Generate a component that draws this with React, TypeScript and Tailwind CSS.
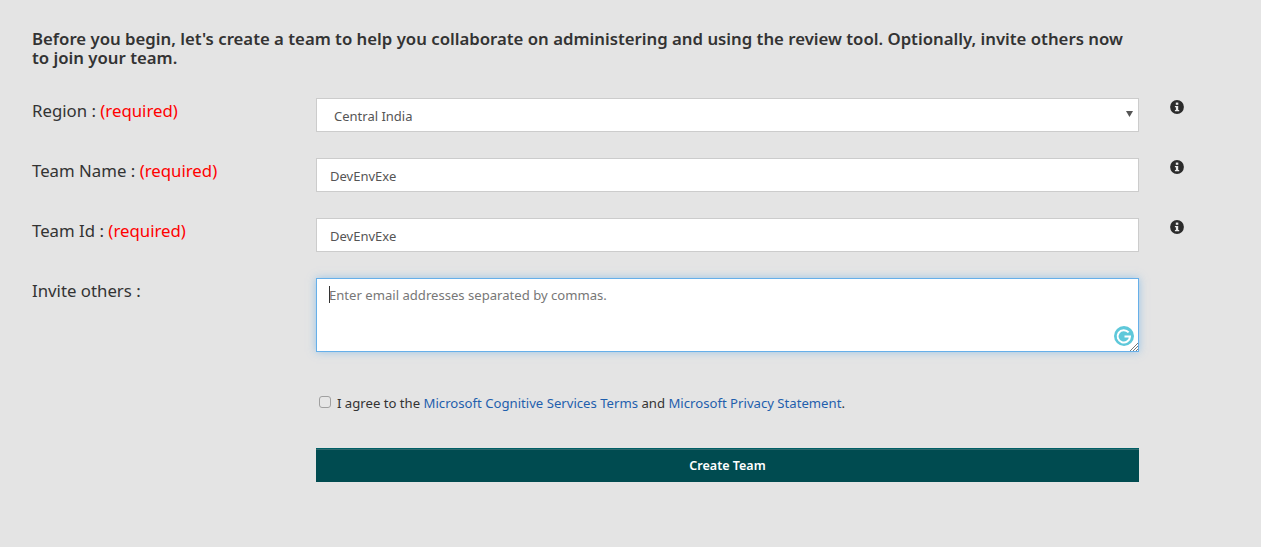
function Info() {
  return (
    <svg width="14" height="14" viewBox="0 0 14 14" className="block">
      <circle cx="7" cy="7" r="6.9" fill="#2b2b2b" />
      <rect x="5.8" y="2.6" width="2.5" height="2.2" fill="#e8e8e8" />
      <path d="M4.9 5.9H8.2V9.9H9.2V11.3H4.9V9.9H5.9V7.2H4.9Z" fill="#e8e8e8" />
    </svg>
  );
}

function Row({ label, required, children, info }: { label: string; required?: boolean; children: React.ReactNode; info?: boolean }) {
  return (
    <div className="flex mb-[26px]">
      <div className="w-[284px] shrink-0 text-[16.8px] leading-[25px] text-[#333333]">
        {label} :{required && <span className="text-[#ff0000]"> (required)</span>}
      </div>
      <div className="w-[823px] shrink-0">{children}</div>
      {info && (
        <div className="ml-[31px] pt-[2px]">
          <Info />
        </div>
      )}
    </div>
  );
}

const inputCls =
  "block w-full h-[34px] bg-white border border-[#cccccc] px-[13px] pt-[2px] text-[13px] text-[#555555] outline-none";

export default function App() {
  return (
    <div
      className="w-[1261px] h-[547px] overflow-hidden bg-[#e4e4e4] pl-[32px] pt-[29px]"
      style={{ fontFamily: '"Noto Sans", "Open Sans", sans-serif' }}
    >
      <p className="w-[1100px] text-[16.75px] leading-[19px] font-semibold text-[#333333] mb-[31px]">
        Before you begin, let's create a team to help you collaborate on administering and using the review tool. Optionally, invite others now to join your team.
      </p>
      <Row label="Region" required info>
        <div className="relative">
          <div className="flex items-center h-[34px] bg-white border border-[#cccccc] pl-[17px] pt-[4px] text-[13px] text-[#555555]">
            Central India
          </div>
          <svg width="7" height="6" viewBox="0 0 7 6" className="absolute right-[6px] top-[13px]">
            <path d="M0 0H7L3.5 6Z" fill="#555555" />
          </svg>
        </div>
      </Row>
      <Row label="Team Name" required info>
        <input className={inputCls} defaultValue="DevEnvExe" />
      </Row>
      <Row label="Team Id" required info>
        <input className={inputCls} defaultValue="DevEnvExe" />
      </Row>
      <Row label="Invite others">
        <div className="relative h-[74px] bg-white border border-[#66afe9] shadow-[0_0_8px_rgba(102,175,233,0.6)] px-[12px] pt-[6px] text-[13.1px] leading-[20px] text-[#777777]">
          <span className="absolute left-[12px] top-[7px] w-px h-[17px] bg-[#333333]" />
          Enter email addresses separated by commas.
          <svg width="20" height="20" viewBox="0 0 20 20" className="absolute right-[4px] bottom-[5px]">
            <circle cx="10" cy="10" r="10" fill="#5ec8da" />
            <path d="M14.6 6.4A6.2 6.2 0 1 0 16 10.6H10.5" fill="none" stroke="#ffffff" strokeWidth="2" />
          </svg>
          <svg width="9" height="9" viewBox="0 0 9 9" className="absolute right-0 bottom-0">
            <path d="M1 9L9 1M4 9L9 4M7 9L9 7" stroke="#555555" strokeWidth="0.8" fill="none" />
          </svg>
        </div>
      </Row>
      <div className="ml-[284px] mt-[42px] flex items-center h-[20px] w-[823px] text-[13.15px] text-[#333333]">
        <span className="w-[12px] h-[12px] ml-[3px] mr-[6px] mb-[5px] rounded-[3px] border border-[#a0a0a0] bg-[#e6e6e6]" />
        <span>
          I agree to the <span className="text-[#1f5fad]">Microsoft Cognitive Services Terms</span> and{" "}
          <span className="text-[#1f5fad]">Microsoft Privacy Statement</span>.
        </span>
      </div>
      <button className="block ml-[284px] mt-[34px] w-[823px] h-[34px] pt-[2px] bg-[#004b50] border-t border-t-[#005f66] shadow-[inset_0_1px_0_#2d6a6e] text-white text-[12.5px] font-semibold">
        Create Team
      </button>
    </div>
  );
}
